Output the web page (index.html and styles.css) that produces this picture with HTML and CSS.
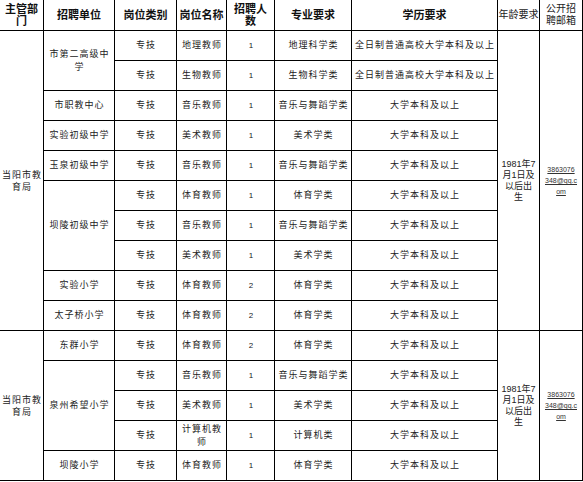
FILE: index.html
```html
<!DOCTYPE html>
<html lang="zh-CN">
<head>
<meta charset="utf-8">
<title>招聘岗位表</title>
<link rel="stylesheet" href="styles.css">
</head>
<body>
<div class="sheet">
  <div class="c h">主管部<br>门</div>
  <div class="c h">招聘单位</div>
  <div class="c h">岗位类别</div>
  <div class="c h">岗位名称</div>
  <div class="c h">招聘人<br>数</div>
  <div class="c h">专业要求</div>
  <div class="c h">学历要求</div>
  <div class="c hn">年龄要求</div>
  <div class="c hn">公开招<br>聘邮箱</div>

  <div class="c span10 dept">当阳市教<br>育局</div>
  <div class="c span2">市第二高级中<br>学</div>
  <div class="c">专技</div>
  <div class="c">地理教师</div>
  <div class="c num">1</div>
  <div class="c">地理科学类</div>
  <div class="c">全日制普通高校大学本科及以上</div>
  <div class="c span10 age">1981年7<br>月1日及<br>以后出<br>生</div>
  <div class="c span10 mail"><a class="link">3863076<br>348@qq.c<br>om</a></div>

  <div class="c">专技</div>
  <div class="c">生物教师</div>
  <div class="c num">1</div>
  <div class="c">生物科学类</div>
  <div class="c">全日制普通高校大学本科及以上</div>

  <div class="c">市职教中心</div>
  <div class="c">专技</div>
  <div class="c">音乐教师</div>
  <div class="c num">1</div>
  <div class="c">音乐与舞蹈学类</div>
  <div class="c">大学本科及以上</div>

  <div class="c">实验初级中学</div>
  <div class="c">专技</div>
  <div class="c">美术教师</div>
  <div class="c num">1</div>
  <div class="c">美术学类</div>
  <div class="c">大学本科及以上</div>

  <div class="c">玉泉初级中学</div>
  <div class="c">专技</div>
  <div class="c">音乐教师</div>
  <div class="c num">1</div>
  <div class="c">音乐与舞蹈学类</div>
  <div class="c">大学本科及以上</div>

  <div class="c span3">坝陵初级中学</div>
  <div class="c">专技</div>
  <div class="c">体育教师</div>
  <div class="c num">1</div>
  <div class="c">体育学类</div>
  <div class="c">大学本科及以上</div>

  <div class="c">专技</div>
  <div class="c">音乐教师</div>
  <div class="c num">1</div>
  <div class="c">音乐与舞蹈学类</div>
  <div class="c">大学本科及以上</div>

  <div class="c">专技</div>
  <div class="c">美术教师</div>
  <div class="c num">1</div>
  <div class="c">美术学类</div>
  <div class="c">大学本科及以上</div>

  <div class="c">实验小学</div>
  <div class="c">专技</div>
  <div class="c">体育教师</div>
  <div class="c num">2</div>
  <div class="c">体育学类</div>
  <div class="c">大学本科及以上</div>

  <div class="c">太子桥小学</div>
  <div class="c">专技</div>
  <div class="c">体育教师</div>
  <div class="c num">2</div>
  <div class="c">体育学类</div>
  <div class="c">大学本科及以上</div>

  <div class="c span5 dept">当阳市教<br>育局</div>
  <div class="c">东群小学</div>
  <div class="c">专技</div>
  <div class="c">体育教师</div>
  <div class="c num">2</div>
  <div class="c">体育学类</div>
  <div class="c">大学本科及以上</div>
  <div class="c span5 age">1981年7<br>月1日及<br>以后出<br>生</div>
  <div class="c span5 mail"><a class="link">3863076<br>348@qq.c<br>om</a></div>

  <div class="c span3">泉州希望小学</div>
  <div class="c">专技</div>
  <div class="c">音乐教师</div>
  <div class="c num">1</div>
  <div class="c">音乐与舞蹈学类</div>
  <div class="c">大学本科及以上</div>

  <div class="c">专技</div>
  <div class="c">美术教师</div>
  <div class="c num">1</div>
  <div class="c">美术学类</div>
  <div class="c">大学本科及以上</div>

  <div class="c">专技</div>
  <div class="c">计算机教<br>师</div>
  <div class="c num">1</div>
  <div class="c">计算机类</div>
  <div class="c">大学本科及以上</div>

  <div class="c">坝陵小学</div>
  <div class="c">专技</div>
  <div class="c">体育教师</div>
  <div class="c num">1</div>
  <div class="c">体育学类</div>
  <div class="c">大学本科及以上</div>
</div>
</body>
</html>
```

FILE: styles.css
```css
html, body {
  margin: 0;
  padding: 0;
  background: #ffffff;
}

body {
  width: 583px;
  height: 482px;
  overflow: hidden;
  font-family: "Liberation Sans", "Noto Sans CJK SC", sans-serif;
  color: #222;
}

.sheet {
  display: grid;
  grid-template-columns: 44px 71px 62px 50px 48px 77px 146px 42px 43px;
  grid-template-rows: 31px repeat(15, 30px);
}

.c {
  box-sizing: border-box;
  border-right: 1px solid #000;
  border-bottom: 1px solid #000;
  display: flex;
  align-items: center;
  justify-content: center;
  text-align: center;
  font-size: 9px;
  line-height: 13px;
  letter-spacing: 1px;
  padding: 0 1px 0 2px;
  white-space: nowrap;
}

.h {
  font-size: 11px;
  font-weight: bold;
  letter-spacing: 0;
  line-height: 12px;
  color: #111;
  padding: 0;
}

.hn {
  font-size: 10px;
  letter-spacing: 0;
  line-height: 12px;
  padding: 0;
}

.num {
  font-size: 8px;
  letter-spacing: 0;
}

.dept {
  line-height: 12px;
}

.span2 { grid-row: span 2; }
.span3 { grid-row: span 3; }
.span5 { grid-row: span 5; }
.span10 { grid-row: span 10; }

.age {
  font-size: 9px;
  letter-spacing: 0;
  line-height: 11px;
  padding: 0;
}

.mail {
  padding: 0;
}

.link {
  font-size: 7px;
  letter-spacing: 0;
  line-height: 11px;
  color: #333;
  text-decoration: underline;
}
```
